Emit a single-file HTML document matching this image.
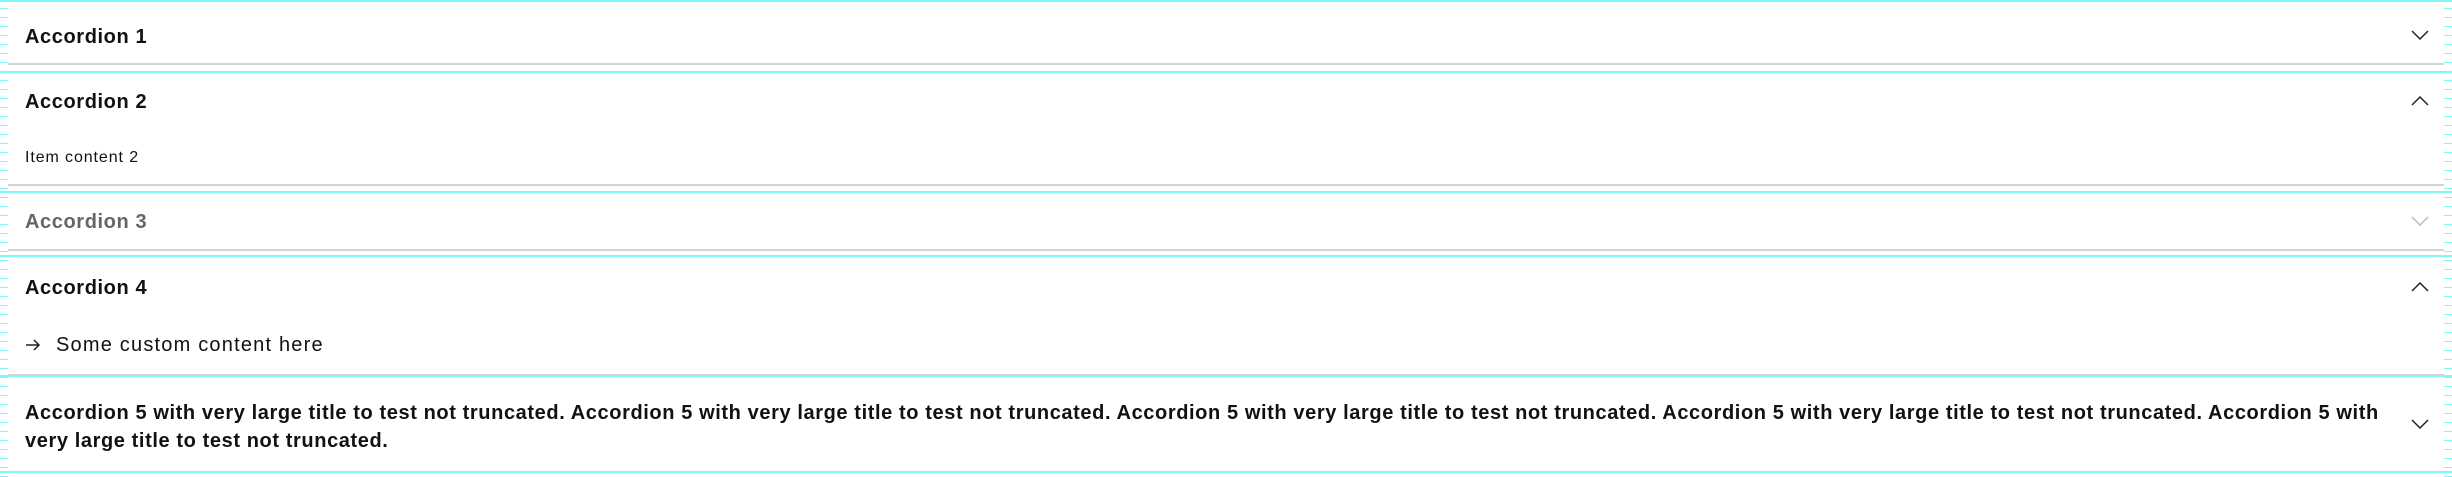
<!DOCTYPE html>
<html><head><style>
html,body{margin:0;padding:0;background:#fff;}
body{width:2452px;height:477px;position:relative;overflow:hidden;font-family:"Liberation Sans",sans-serif;color:#111;}
.ticks{position:absolute;top:0;width:8px;height:477px;background:repeating-linear-gradient(to bottom,transparent 0,transparent 8px,#7ff7f7 8px,#7ff7f7 9px);}
.cy{position:absolute;left:0;width:2452px;height:2px;background:#7ff7f7;}
.gr{position:absolute;left:8px;width:2436px;height:2px;background:#d4d4d4;}
.t{position:absolute;left:25px;font-size:20px;font-weight:bold;letter-spacing:0.6px;white-space:nowrap;line-height:28px;}
.c{position:absolute;left:25px;white-space:nowrap;}
svg.ch{position:absolute;left:2411px;width:18px;height:10px;}
</style></head><body>
<div class="ticks" style="left:0"></div>
<div class="ticks" style="left:2444px"></div>

<div class="cy" style="top:0"></div>
<div class="t" style="top:23px">Accordion 1</div>
<svg class="ch" style="top:30px" viewBox="0 0 18 10"><path d="M1 1 L9 9 L17 1" fill="none" stroke="#222" stroke-width="1.5"/></svg>
<div class="gr" style="top:63px"></div>

<div class="cy" style="top:71px"></div>
<div class="t" style="top:88px">Accordion 2</div>
<svg class="ch" style="top:96px" viewBox="0 0 18 10"><path d="M1 9 L9 1 L17 9" fill="none" stroke="#222" stroke-width="1.5"/></svg>
<div class="c" style="top:149px;font-size:16px;letter-spacing:0.9px;">Item content 2</div>
<div class="gr" style="top:184px"></div>

<div class="cy" style="top:191px"></div>
<div class="t" style="top:208px;color:#666">Accordion 3</div>
<svg class="ch" style="top:216px" viewBox="0 0 18 10"><path d="M1 1 L9 9 L17 1" fill="none" stroke="#bbb" stroke-width="1.5"/></svg>
<div class="gr" style="top:249px"></div>

<div class="cy" style="top:255px"></div>
<div class="t" style="top:274px">Accordion 4</div>
<svg class="ch" style="top:282px" viewBox="0 0 18 10"><path d="M1 9 L9 1 L17 9" fill="none" stroke="#222" stroke-width="1.5"/></svg>
<svg style="position:absolute;left:25px;top:339px;width:16px;height:12px" viewBox="0 0 16 12"><path d="M1 6 H14 M9 1 L14 6 L9 11" fill="none" stroke="#222" stroke-width="1.5"/></svg>
<div class="c" style="top:333px;left:56px;font-size:20px;line-height:24px;letter-spacing:1.2px;">Some custom content here</div>
<div class="gr" style="top:374px"></div>
<div class="cy" style="top:375px"></div>

<div class="t" style="top:399px;">Accordion 5 with very large title to test not truncated. Accordion 5 with very large title to test not truncated. Accordion 5 with very large title to test not truncated. Accordion 5 with very large title to test not truncated. Accordion 5 with<br>very large title to test not truncated.</div>
<svg class="ch" style="top:419px" viewBox="0 0 18 10"><path d="M1 1 L9 9 L17 1" fill="none" stroke="#222" stroke-width="1.5"/></svg>
<div class="cy" style="top:471px"></div>
</body></html>
